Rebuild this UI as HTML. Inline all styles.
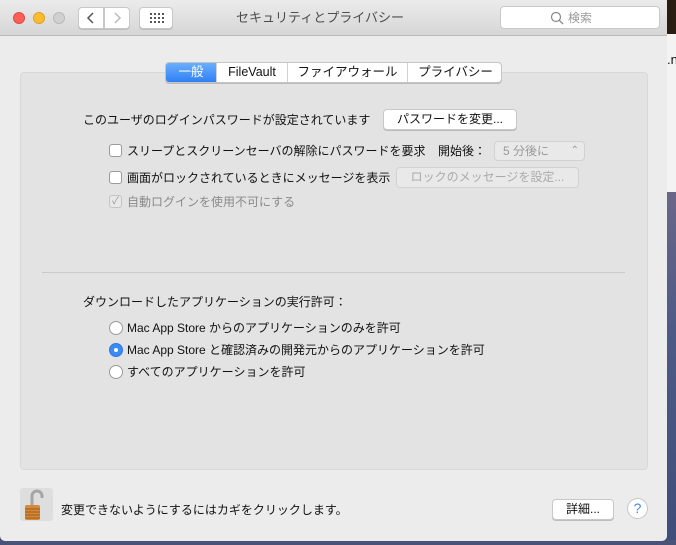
<!DOCTYPE html>
<html><head><meta charset="utf-8"><style>
*{margin:0;padding:0;box-sizing:border-box}
body{width:676px;height:545px;overflow:hidden;position:relative;background:#3a4566;font-family:"Liberation Sans","Noto Sans CJK JP",sans-serif;font-size:12px;color:#111}
.abs{position:absolute}
.desk1{left:667px;top:0;width:9px;height:34px;background:#2a1d12}
.desk2{left:667px;top:34px;width:9px;height:158px;background:#f3f3f3}
.desk3{left:667px;top:192px;width:9px;height:353px;background:linear-gradient(#6a6688,#4d5a86 40%,#3e4d7a)}
.bottom{left:0;top:540px;width:676px;height:5px;background:#4a5278}
.win{left:0;top:0;width:667px;height:541px;background:#ececec;border-radius:0 0 5px 5px;overflow:hidden}
.title{left:0;top:0;width:667px;height:36px;background:linear-gradient(#ebebeb,#d6d6d6);border-bottom:1px solid #b9b9b9}
.dot{width:12px;height:12px;border-radius:50%;top:12px}
.btn{background:#fff;border:1px solid #c8c8c8;border-radius:4px;box-shadow:0 1px 0 #bdbdbd}
.panel{left:20px;top:72px;width:628px;height:398px;background:#e3e3e3;border:1px solid #d8d8d8;border-radius:4px}
.tabs{left:165px;top:62px;width:337px;height:21px;border:1px solid #c4c4c4;border-radius:4px;background:#fff;overflow:hidden;box-shadow:0 1px 0 #bbb}
.tabs div{position:absolute;top:0;height:19px;line-height:19px;font-size:12.5px;border-left:1px solid #d0d0d0;text-align:center;white-space:nowrap}
.cb{width:13px;height:13px;border:1px solid #9a9a9a;border-radius:3px;background:#fff}
.rb{width:14px;height:14px;border:1px solid #9a9a9a;border-radius:50%;background:#fff}
.t{white-space:nowrap;line-height:16px}
</style></head><body>
<div class="abs desk1"></div><div class="abs desk2"><span style="position:absolute;left:0;top:18px;font-size:13px">.n</span></div><div class="abs desk3"></div><div class="abs bottom"></div>
<div class="abs win">
<div class="abs title"></div>
<div class="abs dot" style="left:13px;background:#fc5f57;border:1px solid #de4a43"></div>
<div class="abs dot" style="left:33px;background:#fdbc2e;border:1px solid #dfa024"></div>
<div class="abs dot" style="left:53px;background:#d0d0d0;border:1px solid #b8b8b8"></div>
<div class="abs btn" style="left:78px;top:7px;width:26px;height:22px;border-radius:4px 0 0 4px"><svg width="24" height="20"><path d="M14 5 L9 10 L14 15" stroke="#555" stroke-width="1.5" fill="none"/></svg></div>
<div class="abs btn" style="left:104px;top:7px;width:26px;height:22px;border-radius:0 4px 4px 0"><svg width="24" height="20"><path d="M10 5 L15 10 L10 15" stroke="#bbb" stroke-width="1.5" fill="none"/></svg></div>
<div class="abs btn" style="left:139px;top:7px;width:34px;height:22px"><svg width="32" height="20"><g fill="#555"><rect x="10" y="5" width="2" height="2"/><rect x="14" y="5" width="2" height="2"/><rect x="18" y="5" width="2" height="2"/><rect x="22" y="5" width="2" height="2"/><rect x="10" y="9" width="2" height="2"/><rect x="14" y="9" width="2" height="2"/><rect x="18" y="9" width="2" height="2"/><rect x="22" y="9" width="2" height="2"/><rect x="10" y="13" width="2" height="2"/><rect x="14" y="13" width="2" height="2"/><rect x="18" y="13" width="2" height="2"/><rect x="22" y="13" width="2" height="2"/></g></svg></div>
<div class="abs t" style="left:0;width:640px;text-align:center;top:10px;color:#4d4d4d;font-size:13px">セキュリティとプライバシー</div>
<div class="abs btn" style="left:500px;top:6px;width:160px;height:23px;box-shadow:none"><svg class="abs" style="left:49px;top:4px" width="14" height="14"><circle cx="6" cy="6" r="4.5" stroke="#888" stroke-width="1.2" fill="none"/><path d="M9.3 9.3 L13 13" stroke="#888" stroke-width="1.3"/></svg><span class="abs t" style="left:67px;top:3px;color:#999">検索</span></div>
<div class="abs panel"></div>
<div class="abs tabs"><div style="left:0;width:50px;background:linear-gradient(#6aaefc,#2f80f6);color:#fff;border-left:none">一般</div><div style="left:50px;width:71px">FileVault</div><div style="left:121px;width:120px">ファイアウォール</div><div style="left:241px;width:96px">プライバシー</div></div>
<div class="abs t" style="left:83px;top:112px">このユーザのログインパスワードが設定されています</div>
<div class="abs btn t" style="left:383px;top:109px;width:134px;height:21px;text-align:center;line-height:19px">パスワードを変更...</div>
<div class="abs cb" style="left:109px;top:144px"></div>
<div class="abs t" style="left:127px;top:143px">スリープとスクリーンセーバの解除にパスワードを要求</div>
<div class="abs t" style="left:438px;top:143px">開始後：</div>
<div class="abs t" style="left:494px;top:141px;width:91px;height:20px;background:#e9e9e9;border:1px solid #d2d2d2;border-radius:4px;color:#999;padding-left:8px;line-height:18px">5 分後に<span style="position:absolute;right:5px;top:0;font-size:10px">⌃</span></div>
<div class="abs cb" style="left:109px;top:171px"></div>
<div class="abs t" style="left:127px;top:170px">画面がロックされているときにメッセージを表示</div>
<div class="abs t" style="left:396px;top:167px;width:183px;height:21px;background:#e9e9e9;border:1px solid #d2d2d2;border-radius:4px;color:#aaa;text-align:center;line-height:19px">ロックのメッセージを設定...</div>
<div class="abs cb" style="left:109px;top:195px;background:#e8e8e8;border-color:#c4c4c4;font-size:10px;color:#999;line-height:11px;text-align:center">✓</div>
<div class="abs t" style="left:127px;top:194px;color:#8a8a8a">自動ログインを使用不可にする</div>
<div class="abs" style="left:42px;top:272px;width:583px;height:1px;background:#c9c9c9"></div>
<div class="abs t" style="left:83px;top:294px">ダウンロードしたアプリケーションの実行許可：</div>
<div class="abs rb" style="left:109px;top:321px"></div>
<div class="abs t" style="left:127px;top:320px">Mac App Store からのアプリケーションのみを許可</div>
<div class="abs rb" style="left:109px;top:343px;background:#3b8bf5;border-color:#2f78e0"><div style="width:4px;height:4px;background:#fff;border-radius:50%;margin:4px"></div></div>
<div class="abs t" style="left:127px;top:342px">Mac App Store と確認済みの開発元からのアプリケーションを許可</div>
<div class="abs rb" style="left:109px;top:365px"></div>
<div class="abs t" style="left:127px;top:364px">すべてのアプリケーションを許可</div>
<div class="abs" style="left:20px;top:488px;width:33px;height:33px;background:#dedede;border-radius:3px"></div>
<svg class="abs" style="left:22px;top:488px" width="30" height="34"><path d="M10 18 V8 a5 5 0 0 1 10 0 V10" stroke="#a5a5a5" stroke-width="3" fill="none"/><rect x="3" y="17" width="15" height="15" rx="2" fill="#d48a3a"/><g stroke="#a05a1c" stroke-width="1"><path d="M3 21h15M3 24h15M3 27h15M3 30h15"/></g></svg>
<div class="abs t" style="left:61px;top:502px">変更できないようにするにはカギをクリックします。</div>
<div class="abs btn t" style="left:552px;top:499px;width:62px;height:21px;text-align:center;line-height:19px">詳細...</div>
<div class="abs" style="left:627px;top:498px;width:21px;height:21px;border-radius:50%;background:#fff;border:1px solid #c6c6c6;color:#3b8bf5;text-align:center;line-height:19px;font-size:14px">?</div>
</div>
</body></html>
